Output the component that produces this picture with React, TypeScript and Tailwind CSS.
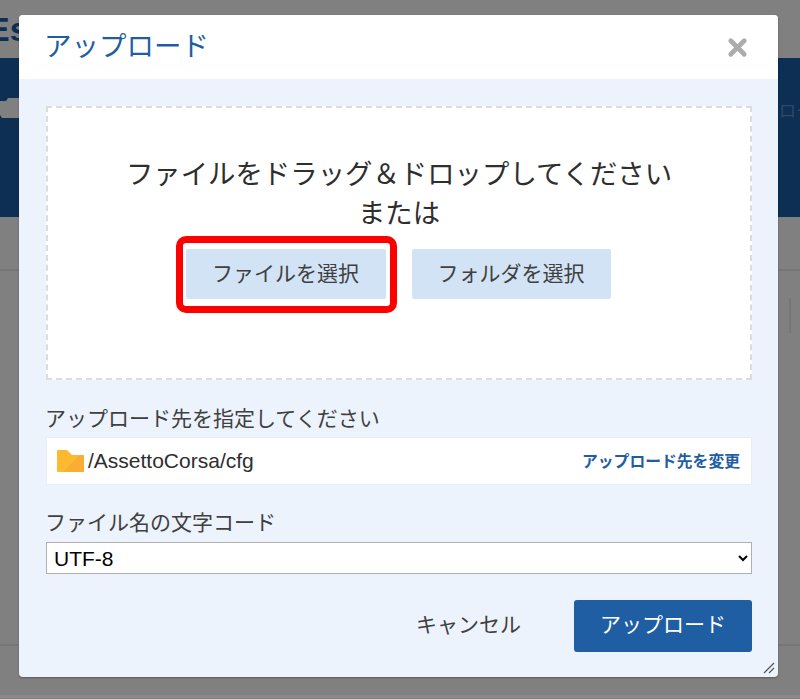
import React from 'react';
import { X } from 'lucide-react';

const jp = 'font-["Noto_Sans_CJK_JP","Liberation_Sans",sans-serif]';

const FolderIcon = () => (
  <svg width="27" height="24" viewBox="0 0 27 24" className="shrink-0">
    <path d="M0 2a1 1 0 0 1 1-1h9l5 5h11a1 1 0 0 1 1 1v15a1 1 0 0 1-1 1H1a1 1 0 0 1-1-1z" fill="#fdb92f" />
    <path d="M6 23 23 6h3a1 1 0 0 1 1 1v15a1 1 0 0 1-1 1z" fill="#f9ae33" />
  </svg>
);

const ResizeGrip = () => (
  <svg width="12" height="12" viewBox="0 0 12 12" className="absolute right-[3px] bottom-[3px]">
    <path d="M1 11 11 1M6 11l5-5" stroke="#555" strokeWidth="1.2" fill="none" />
  </svg>
);

const Backdrop = () => (
  <div className="flex h-full flex-col">
    <div className="h-[58px] overflow-hidden">
      <p className="-ml-[13px] pt-[9px] font-['Liberation_Sans',sans-serif] text-[34px] leading-[40px] font-bold text-[#0c2e52]">
        Es
      </p>
    </div>
    <div className="flex h-[159px] items-start justify-between overflow-hidden bg-[#0d2f53] pt-[40px]">
      <svg width="19" height="24" viewBox="0 0 19 24" className="shrink-0">
        <path d="M0 3h6l2-3h11v20H2l-2-3z" fill="#808080" />
      </svg>
      <span className="mr-[-30px] text-[17px] leading-[24px] text-[#2f4a68]">ロード</span>
    </div>
    <div className="h-[54px] border-b-2 border-[#767676]" />
    <div className="flex h-[375px] justify-end border-b-2 border-[#767676] pt-[27px]">
      <div className="mr-[9px] h-[35px] w-[2px] bg-[#767676]" />
    </div>
    <div className="mt-[49px] h-[3px] bg-[#8a8a8a]" />
  </div>
);

export default function App() {
  return (
    <div className={`relative h-[699px] w-[800px] overflow-hidden bg-[#808080] ${jp}`}>
      <Backdrop />

      <div className="absolute top-[15px] left-[19px] flex h-[662px] w-[759px] flex-col overflow-hidden rounded-[4px] bg-[#ecf3fc] shadow-[0_1px_2px_rgba(0,0,0,0.3)]">
        <div className="flex h-[64px] shrink-0 items-center justify-between bg-white pr-[27px] pb-[5px] pl-[25px]">
          <h2 className="text-[27.5px] leading-none font-normal text-[#1f5ea3]">アップロード</h2>
          <X className="mt-[5px] h-[27px] w-[27px] text-[#acacac]" strokeWidth={4.2} />
        </div>

        <div className="flex flex-1 flex-col pt-[27px] pr-[26px] pl-[27px]">
          <div className="flex h-[274px] flex-col items-center border-2 border-dashed border-[#dcdcdc] bg-white pt-[45px]">
            <p className="text-[27.4px] leading-[39px] text-[#2e2e2e]">ファイルをドラッグ＆ドロップしてください</p>
            <p className="text-[27.4px] leading-[39px] text-[#2e2e2e]">または</p>
            <div className="mt-[18px] mr-[2px] flex gap-[26px]">
              <button className="h-[50px] w-[200px] rounded-[2px] bg-[#d2e3f5] pb-[2px] text-[21px] text-[#404040]">
                ファイルを選択
              </button>
              <button className="h-[50px] w-[199px] rounded-[2px] bg-[#d2e3f5] pb-[2px] text-[21px] text-[#404040]">
                フォルダを選択
              </button>
            </div>
          </div>

          <p className="mt-[22px] -ml-[1px] text-[21px] leading-[30px] text-[#404040]">アップロード先を指定してください</p>
          <div className="mt-[5px] flex h-[48px] items-center justify-between border border-[#e6eef6] bg-white pr-[10px] pl-[10px]">
            <div className="flex items-center gap-[4px]">
              <FolderIcon />
              <span className="font-['Liberation_Sans',sans-serif] text-[21px] text-[#2e2e2e]">/AssettoCorsa/cfg</span>
            </div>
            <span className="mr-[1px] text-[15.8px] font-bold text-[#1f5ea3]">アップロード先を変更</span>
          </div>

          <p className="mt-[21px] -ml-[1px] text-[21px] leading-[30px] text-[#404040]">ファイル名の文字コード</p>
          <select className="mt-[6px] h-[32px] w-full border border-[#b0b0b0] bg-white pl-[3px] font-['Liberation_Sans',sans-serif] text-[21px] text-black">
            <option>UTF-8</option>
          </select>

          <div className="mt-[26px] flex items-center justify-end">
            <button className="mr-[53px] pb-[5px] text-[21px] text-[#404040]">キャンセル</button>
            <button className="h-[52px] w-[178px] rounded-[3px] bg-[#1f5ea3] pb-[5px] text-[21px] text-white">アップロード</button>
          </div>
        </div>
        <ResizeGrip />
      </div>

      {/* red annotation over the file button */}
      <div className="absolute top-[236px] left-[176px] h-[77px] w-[221px] rounded-[10px] border-[7px] border-[#ff0000]" />
    </div>
  );
}
